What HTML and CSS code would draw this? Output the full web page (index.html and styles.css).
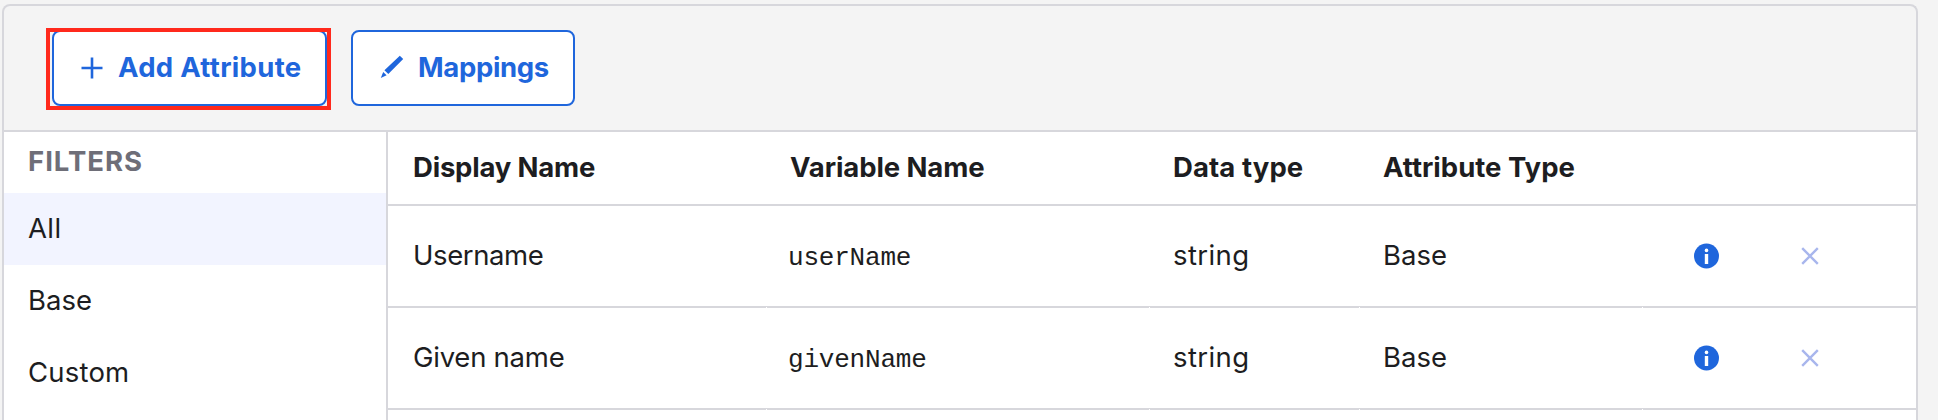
FILE: index.html
```html
<!DOCTYPE html>
<html lang="en">
<head>
<meta charset="utf-8">
<title>Attributes</title>
<link rel="stylesheet" href="styles.css">
</head>
<body>
<main class="panel">
  <header class="toolbar">
    <div class="highlighted">
      <button class="btn btn-add"><svg class="icon-plus" width="22" height="22" viewBox="0 0 22 22"><path d="M11 .5v21M.5 11h21" fill="none" stroke="#1f66dc" stroke-width="2.6"/></svg><span class="label-add">Add Attribute</span></button>
      <span class="highlight"></span>
    </div>
    <button class="btn btn-map"><svg class="icon-pencil" width="24" height="24" viewBox="0 0 24 24"><path d="M19.8 .7 23.2 4.1 8.3 18.9 4.4 15.2ZM3.2 17.1 6.6 20.3 .8 22.9Z" fill="#1f66dc"/></svg><span class="label-map">Mappings</span></button>
  </header>
  <div class="content">
    <nav class="sidebar">
      <h2 class="filters-title">FILTERS</h2>
      <a class="filter active">All</a>
      <a class="filter filter-base">Base</a>
      <a class="filter filter-custom">Custom</a>
    </nav>
    <section class="table">
      <div class="row head">
        <div class="cell h-display">Display Name</div>
        <div class="cell h-variable">Variable Name</div>
        <div class="cell h-data">Data type</div>
        <div class="cell h-attribute">Attribute Type</div>
        <div class="cell"></div>
      </div>
      <div class="row">
        <div class="cell username">Username</div>
        <div class="cell variable"><code class="code">userName</code></div>
        <div class="cell type">string</div>
        <div class="cell base">Base</div>
        <div class="cell actions">
          <svg width="26" height="26" viewBox="0 0 26 26"><circle cx="12.5" cy="13" r="12.5" fill="#1f66dc"/><circle cx="12.5" cy="7.4" r="1.8" fill="#fff"/><path d="M10.8 11h3.4v10h-3.4z" fill="#fff"/></svg>
          <svg width="18" height="18" viewBox="0 0 18 18"><path d="M1.2 1.2 16.8 16.8M16.8 1.2 1.2 16.8" fill="none" stroke="#a8b6ed" stroke-width="2.4"/></svg>
        </div>
      </div>
      <div class="row">
        <div class="cell given">Given name</div>
        <div class="cell variable"><code class="code">givenName</code></div>
        <div class="cell type">string</div>
        <div class="cell base">Base</div>
        <div class="cell actions">
          <svg width="26" height="26" viewBox="0 0 26 26"><circle cx="12.5" cy="13" r="12.5" fill="#1f66dc"/><circle cx="12.5" cy="7.4" r="1.8" fill="#fff"/><path d="M10.8 11h3.4v10h-3.4z" fill="#fff"/></svg>
          <svg width="18" height="18" viewBox="0 0 18 18"><path d="M1.2 1.2 16.8 16.8M16.8 1.2 1.2 16.8" fill="none" stroke="#a8b6ed" stroke-width="2.4"/></svg>
        </div>
      </div>
    </section>
  </div>
</main>
</body>
</html>
```
FILE: styles.css
```css
* { box-sizing: border-box; }
html, body { height: 100%; }
body {
  margin: 0;
  padding: 4px 20px 0 2px;
  overflow: hidden;
  background: #f4f4f4;
  color: #1d1d21;
  font: 400 27.5px/1 Inter, "Liberation Sans", sans-serif;
}
.panel {
  display: flex;
  flex-direction: column;
  height: 416px;
  border: 2px solid #d7d7dc;
  border-bottom: 0;
  border-radius: 8px 8px 0 0;
}
.toolbar {
  flex: none;
  display: flex;
  gap: 24px;
  height: 126px;
  padding: 24px 0 0 48px;
  border-bottom: 2px solid #d7d7dc;
}
.highlighted { position: relative; }
.highlight {
  position: absolute;
  left: -6px;
  top: -2px;
  width: 285px;
  height: 82px;
  border: 4px solid #ff291c;
}
.btn {
  display: flex;
  align-items: center;
  height: 76px;
  padding: 0;
  border: 2px solid #1f66dc;
  border-radius: 8px;
  background: #fff;
  color: #1f66dc;
  font: 700 27.5px/70px Inter, "Liberation Sans", sans-serif;
  white-space: nowrap;
}
.btn span { padding-bottom: 2px; }
.btn-add { width: 275px; padding-left: 27px; gap: 15px; }
.btn-map { width: 224px; padding-left: 27px; gap: 14px; }
.icon-pencil { margin-bottom: 2px; }
.label-add { letter-spacing: .3px; }
.label-map { letter-spacing: -.34px; }
.content { flex: 1; display: flex; min-height: 0; background: #fff; }
.sidebar { width: 384px; border-right: 2px solid #d7d7dc; }
.filters-title {
  height: 61px;
  margin: 0;
  padding-left: 24px;
  color: #6e6e78;
  font-size: 27.5px;
  font-weight: 700;
  line-height: 59px;
  letter-spacing: 1px;
}
.filter { display: block; height: 72px; padding-left: 24px; line-height: 71px; }
.filter.active { background: #f2f4ff; letter-spacing: .4px; }
.filter-custom { letter-spacing: .2px; }
.table { flex: 1; }
.row {
  display: grid;
  grid-template-columns: 378px 383px 210px 283px 1fr;
  height: 102px;
}
.head { height: 74px; }
.cell { padding-left: 24px; border-bottom: 2px solid #d7d7dc; line-height: 99px; }
.head .cell { line-height: 70px; font-weight: 700; }
.row:not(.head) .cell {
  padding-bottom: 2px;
  border-bottom: 0;
  background: linear-gradient(#d7d7dc, #d7d7dc) 0 100% / 100% 2px no-repeat;
}
.row:not(.head) .cell + .cell {
  background:
    linear-gradient(#fff, #fff) 0 100% / 1px 1px no-repeat,
    linear-gradient(#d7d7dc, #d7d7dc) 0 100% / 100% 2px no-repeat;
}
.h-display, .username, .given { padding-left: 25px; }
.h-display { letter-spacing: -.2px; }
.h-variable { letter-spacing: -.1px; }
.h-data { letter-spacing: .1px; }
.username { letter-spacing: -.4px; }
.given { letter-spacing: -.25px; }
.row .variable { padding-left: 22px; }
.type { letter-spacing: .4px; }
.code { font: 26px/1 "Liberation Mono", monospace; letter-spacing: -.2px; }
.actions { display: flex; align-items: center; gap: 81px; }
.row .actions { padding-left: 52px; }
```
